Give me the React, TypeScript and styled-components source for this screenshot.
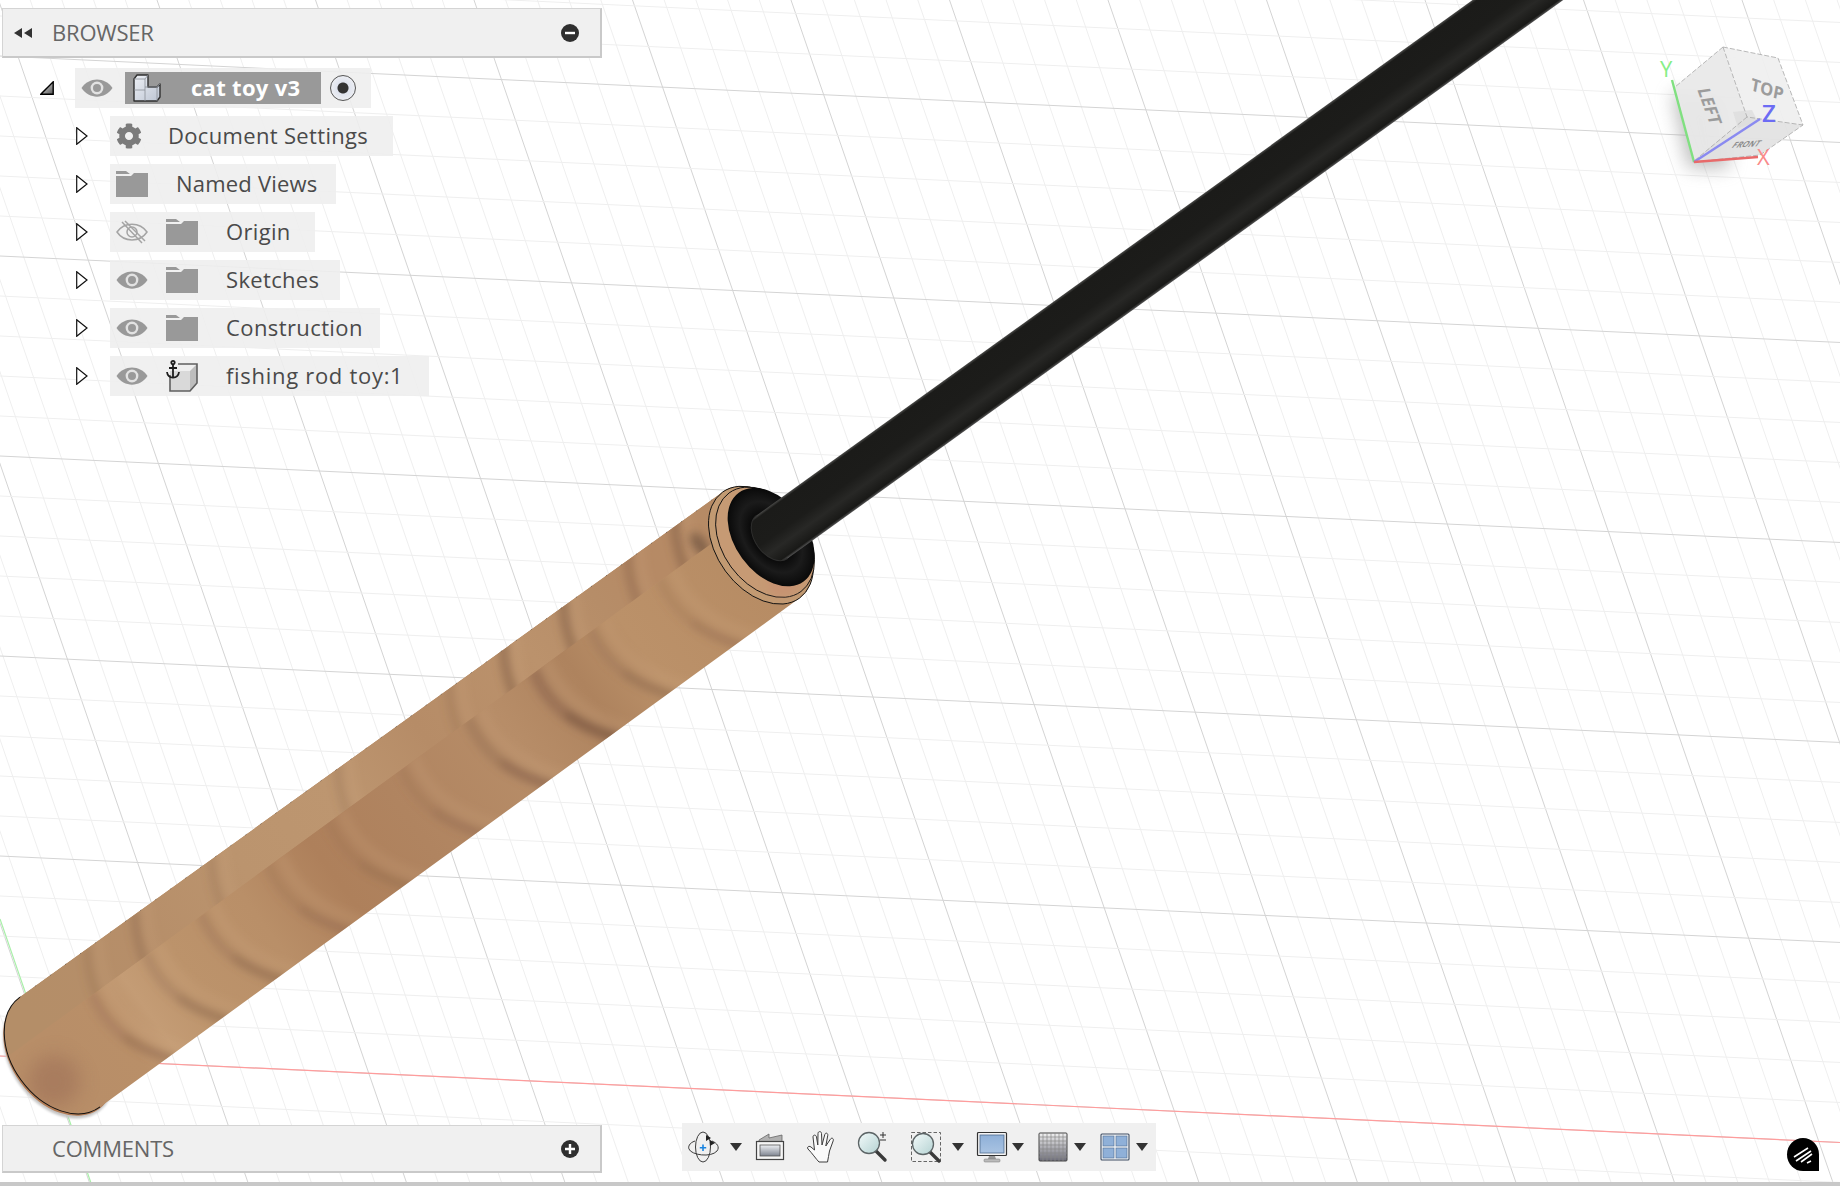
import React from 'react';
import styled, { createGlobalStyle } from 'styled-components';
import { FaCog } from 'react-icons/fa';

const GlobalStyle = createGlobalStyle`
  html, body {
    margin: 0;
    padding: 0;
    background: #fff;
    overflow: hidden;
  }
  body {
    font-family: "Open Sans", "Noto Sans", "Liberation Sans", sans-serif;
  }
`;

const Viewport = styled.div`
  position: relative;
  width: 1840px;
  height: 1186px;
  overflow: hidden;
  background: #fff;
`;

const Scene = styled.svg`
  position: absolute;
  top: 0;
  left: 0;
`;

const Hud = styled.div`
  position: relative;
  height: 1182px;
  box-sizing: border-box;
  padding: 8px 0 9px 2px;
  display: flex;
  flex-direction: column;
  justify-content: space-between;
`;

const StatusStrip = styled.div`
  position: relative;
  height: 4px;
  background: #c8c8c8;
`;

const PanelBar = styled.div`
  box-sizing: border-box;
  width: 600px;
  height: ${(p: { $h: number }) => p.$h}px;
  background: #f0f0f0;
  border: 1px solid #d4d4d4;
  border-right: 2px solid #c9c9c9;
  border-bottom: 2px solid #c9c9c9;
  display: flex;
  align-items: center;
  padding-right: 21px;
`;

const PanelToggle = styled.svg`
  margin-left: 10px;
  width: 20px;
  height: 10px;
`;

const PanelTitle = styled.span<{ $left: number }>`
  margin-left: ${(p) => p.$left}px;
  padding-bottom: 2px;
  font-size: 22px;
  color: #666;
  letter-spacing: -0.2px;
  flex: 1;
`;

const Tree = styled.div`
  margin-top: 10px;
  display: flex;
  flex-direction: column;
  gap: 8px;
  flex: 1;
`;

const Branch = styled.div<{ $indent: number; $gap: number }>`
  display: flex;
  align-items: center;
  padding-left: ${(p) => p.$indent}px;
  gap: ${(p) => p.$gap}px;
  height: 40px;
`;

const RowChip = styled.div<{ $end: number; $start?: number }>`
  height: 40px;
  display: flex;
  align-items: center;
  padding-left: ${(p) => p.$start ?? 6}px;
  padding-right: ${(p) => p.$end}px;
  background: rgba(238, 238, 238, 0.88);
`;

const RowLabel = styled.span<{ $left: number; $track: number }>`
  margin-left: ${(p) => p.$left}px;
  padding-bottom: 2px;
  font-size: 22px;
  line-height: 38px;
  letter-spacing: ${(p) => p.$track}px;
  color: #4a4a4a;
  white-space: nowrap;
`;

const SelectedName = styled.div`
  box-sizing: border-box;
  width: 196px;
  height: 32px;
  margin-left: 12px;
  background: #999;
  display: flex;
  align-items: center;
  padding-left: 8px;
  color: #fff;
  font-size: 22px;
  font-weight: 700;
  letter-spacing: 0.3px;
  white-space: nowrap;
`;

const SelectedText = styled.span`
  margin-left: 30px;
  padding-bottom: 2px;
`;

const RadioDot = styled.div`
  box-sizing: border-box;
  width: 26px;
  height: 26px;
  margin-left: 9px;
  border-radius: 50%;
  border: 1.5px solid #555;
  background: radial-gradient(circle at 50% 50%, #333 0 5px, #dfe3ee 6px, #f6f6f6 100%);
`;

const GearIcon = styled(FaCog)`
  width: 26px;
  height: 26px;
  color: #7b7b7b;
`;

const Footer = styled.div`
  display: flex;
  align-items: flex-end;
`;

const Toolbar = styled.div`
  margin-left: 80px;
  margin-bottom: 2px;
  height: 48px;
  width: 474px;
  box-sizing: border-box;
  padding-left: 5px;
  background: #f0f0f0;
  display: flex;
  align-items: center;
`;

const ToolSlot = styled.div<{ $ml: number }>`
  margin-left: ${(p) => p.$ml}px;
  display: flex;
  align-items: center;
`;

const ToolIcon = styled.svg`
  width: 34px;
  height: 34px;
  display: block;
`;

const Caret = styled.div`
  width: 0;
  height: 0;
  border-left: 6px solid transparent;
  border-right: 6px solid transparent;
  border-top: 8px solid #333;
`;

const Balloon = styled.div`
  position: absolute;
  right: 21px;
  bottom: 15px;
  width: 32px;
  height: 33px;
  border-radius: 50% 50% 0 50%;
  background: #000;
  display: flex;
  align-items: center;
  justify-content: center;
`;

// ---- scene data, measured off the reference ----

const range = (n: number) => Array.from({ length: n }, (_, i) => i);

const SLOPE_A = 0.345;
const SLOPE_B = 0.047;

const woodLow = [
  [0, '#b88e68'], [60, '#b98f68'], [95, '#c49c75'], [150, '#bc936b'], [240, '#b98f68'],
  [325, '#ae805b'], [420, '#b08460'], [553, '#b78d68'], [640, '#ae835e'], [707, '#bb9169'], [869, '#b68b63'], [920, '#b68b63'],
] as const;

const woodHigh = [
  [0, '#b48e68'], [130, '#b68e69'], [257, '#bb946e'], [374, '#bd9670'], [480, '#b68c67'],
  [616, '#bb926c'], [700, '#b68d68'], [759, '#b68a65'], [920, '#b68b65'],
] as const;

const ringsLow = [
  { x: 57, o: 0.36, w: 10 }, { x: 124, o: 0.38, w: 10 }, { x: 192, o: 0.4, w: 10 }, { x: 275, o: 0.26, w: 10 },
  { x: 350, o: 0.24, w: 10 }, { x: 440, o: 0.26, w: 10 }, { x: 523, o: 0.5, w: 11 }, { x: 604, o: 0.75, w: 12 },
  { x: 675, o: 0.38, w: 10 }, { x: 760, o: 0.26, w: 10 },
];

const ringsHigh = [
  { x: 61, o: 0.22, w: 9 }, { x: 120, o: 0.34, w: 9 }, { x: 215, o: 0.2, w: 9 }, { x: 371, o: 0.2, w: 9 },
  { x: 509, o: 0.22, w: 9 }, { x: 576, o: 0.5, w: 10 }, { x: 650, o: 0.5, w: 10 }, { x: 730, o: 0.36, w: 10 }, { x: 788, o: 0.5, w: 10 },
];

const ringPath = (x0: number, from: number, to: number) =>
  range(11)
    .map((i) => {
      const y = from + ((to - from) * i) / 10;
      return `${i === 0 ? 'M' : 'L'}${(x0 + 0.0053 * (y + 3) * (y + 3)).toFixed(1)} ${y.toFixed(1)}`;
    })
    .join(' ');

const HANDLE = 'M0 -68 A48 68 0 0 0 0 68 L865 69 A44 65.5 0 0 0 865 -62 Z';

const GridLines = () => (
  <g>
    {range(90).map((k) => {
      const x0 = -318.5 + (k - 12) * 31.7;
      const major = (k - 12) % 5 === 0;
      return (
        <line
          key={`a${k}`}
          x1={x0}
          y1={0}
          x2={x0 + SLOPE_A * 1186}
          y2={1186}
          stroke={major ? '#d4d4d4' : '#efefef'}
          strokeWidth={1}
        />
      );
    })}
    {range(32).map((k) => {
      const y0 = 1096 - k * 40;
      const major = (k - 1) % 5 === 0;
      return (
        <line
          key={`b${k}`}
          x1={0}
          y1={y0}
          x2={1840}
          y2={y0 + SLOPE_B * 1840}
          stroke={major ? '#d4d4d4' : '#efefef'}
          strokeWidth={1}
        />
      );
    })}
    <line x1={0} y1={1056} x2={1840} y2={1056 + SLOPE_B * 1840} stroke="#ff9c9c" strokeWidth={1.2} />
    <line x1={0} y1={919} x2={92} y2={1186} stroke="#a8f0a8" strokeWidth={1.2} />
  </g>
);

const Handle = () => (
  <g transform="translate(60 1052) rotate(-36.1)">
    <ellipse cx={-4} cy={3} rx={48} ry={68} fill="#c4c4c4" filter="url(#soft1)" />
    <ellipse cx={-2} cy={1} rx={48} ry={68} fill="#b47d56" />
    <path d={HANDLE} fill="url(#woodLow)" />
    <g clipPath="url(#handleClip)">
      <g clipPath="url(#aboveSeam)">
        <rect x={-60} y={-80} width={1000} height={53} fill="url(#woodHigh)" />
        <g filter="url(#soft4)" fill="none">
          {ringsHigh.map((r) => (
            <g key={r.x}>
              <path d={ringPath(r.x + 14, -70, -20)} stroke="#d2ac86" strokeWidth={9} opacity={0.16} />
              <path d={ringPath(r.x, -70, -20)} stroke="#7e5a42" strokeWidth={r.w} opacity={r.o} />
            </g>
          ))}
        </g>
        <ellipse cx={816} cy={-33} rx={7} ry={14} fill="#6e5240" opacity={0.7} filter="url(#soft4)" />
      </g>
      <g clipPath="url(#belowSeam)">
        <g filter="url(#soft4)" fill="none">
          {ringsLow.map((r) => (
            <g key={r.x}>
              <path d={ringPath(r.x + 16, -30, 75)} stroke="#d2ac86" strokeWidth={10} opacity={0.18} />
              <path d={ringPath(r.x, -30, 75)} stroke="#86604a" strokeWidth={r.w} opacity={r.o * 0.7} />
              <path d={ringPath(r.x, 25, 75)} stroke="#7a5640" strokeWidth={r.w - 3} opacity={r.o * 0.75} />
            </g>
          ))}
        </g>
        <ellipse cx={-22} cy={20} rx={26} ry={26} fill="#9c6e56" opacity={0.55} filter="url(#soft7)" />
      </g>
    </g>
    <path d="M0 -68 A48 68 0 0 0 0 68" fill="none" stroke="#111" strokeWidth={1} />
    <path d="M0 -68 L865 -62" stroke="#1a1a1a" strokeWidth={0.6} strokeDasharray="1.5 17" opacity={0.55} />
    <ellipse cx={865} cy={3.5} rx={44} ry={65.5} fill="#c29a72" stroke="#111" strokeWidth={0.9} />
    <ellipse cx={870} cy={3.5} rx={42} ry={61} fill="#c69a74" stroke="#111" strokeWidth={0.9} />
    <ellipse cx={862} cy={46} rx={16} ry={14} fill="#c98a70" opacity={0.5} filter="url(#soft4)" />
    <ellipse cx={878} cy={3} rx={36} ry={55} fill="url(#rubber)" />
  </g>
);

const Rod = () => (
  <g transform="translate(772 537) rotate(-35.75)">
    <rect x={0} y={-26.5} width={1100} height={53} fill="url(#rodShade)" />
    <ellipse cx={0} cy={0} rx={17} ry={26.5} fill="url(#rodShade)" />
    <path d="M0 -26.5 A17 26.5 0 0 0 0 26.5" fill="none" stroke="#2e2e2d" strokeWidth={1} />
  </g>
);

const ViewCube = () => (
  <g>
    <polygon points="1672,92 1688,168 1730,168 1720,100" fill="#8a8a8a" opacity={0.55} filter="url(#soft7)" />
    <polygon points="1723,47 1675,87 1693,162 1747,117" fill="#e9e9e9" opacity={0.94} />
    <polygon points="1723,47 1778,58 1803,125 1747,117" fill="#efefef" opacity={0.94} />
    <polygon points="1693,162 1747,117 1803,125 1760,155" fill="#e2e2e2" opacity={0.94} />
    <polygon points="1733,112 1752,110 1758,122 1738,128" fill="#dcdcdc" opacity={0.7} />
    <g fill="none" stroke="#a8a8a8" strokeWidth={0.8} strokeDasharray="5 2">
      <path d="M1723 47 L1778 58 L1803 125 L1760 155 L1693 162 M1723 47 L1675 87 M1723 47 L1747 117 L1803 125 M1747 117 L1693 162" />
    </g>
    <text x={0} y={0} transform="translate(1697 89) rotate(70) skewX(-12)" fontSize={17} fontWeight={700} fill="#9c9c9c" fontFamily="Open Sans, sans-serif">LEFT</text>
    <text x={0} y={0} transform="translate(1750 90) rotate(18) skewX(8)" fontSize={17} fontWeight={700} fill="#9c9c9c" fontFamily="Open Sans, sans-serif">TOP</text>
    <text x={0} y={0} transform="translate(1731 148) rotate(-4) skewX(-40)" fontSize={8} fontWeight={700} fill="#8c8c8c" fontFamily="Open Sans, sans-serif">FRONT</text>
    <line x1={1694} y1={162} x2={1672} y2={80} stroke="#80e080" strokeWidth={2.4} />
    <line x1={1694} y1={162} x2={1760} y2={119} stroke="#8a8af0" strokeWidth={2.4} />
    <line x1={1694} y1={162} x2={1758} y2={157} stroke="#e86a6a" strokeWidth={2.4} />
    <text x={1660} y={77} fontSize={22} fill="#86ee86" fontFamily="Open Sans, sans-serif">Y</text>
    <text x={1762} y={122} fontSize={24} fontWeight={600} fill="#6c6cf4" fontFamily="Open Sans, sans-serif">Z</text>
    <text x={1757} y={165} fontSize={22} fill="#fb8a8a" fontFamily="Open Sans, sans-serif">X</text>
  </g>
);

const SceneDefs = () => (
  <defs>
    <filter id="soft1" filterUnits="userSpaceOnUse" x={-200} y={-200} width={2400} height={1800}>
      <feGaussianBlur stdDeviation={1} />
    </filter>
    <filter id="soft4" filterUnits="userSpaceOnUse" x={-200} y={-200} width={2400} height={1800}>
      <feGaussianBlur stdDeviation={4.5} />
    </filter>
    <filter id="soft7" filterUnits="userSpaceOnUse" x={-200} y={-200} width={2400} height={1800}>
      <feGaussianBlur stdDeviation={9} />
    </filter>
    <linearGradient id="woodLow" gradientUnits="userSpaceOnUse" x1={0} y1={0} x2={920} y2={0}>
      {woodLow.map(([at, color]) => (
        <stop key={at} offset={at / 920} stopColor={color} />
      ))}
    </linearGradient>
    <linearGradient id="woodHigh" gradientUnits="userSpaceOnUse" x1={0} y1={0} x2={920} y2={0}>
      {woodHigh.map(([at, color]) => (
        <stop key={at} offset={at / 920} stopColor={color} />
      ))}
    </linearGradient>
    <clipPath id="handleClip">
      <path d={HANDLE} />
    </clipPath>
    <clipPath id="aboveSeam">
      <rect x={-60} y={-90} width={1000} height={63} />
    </clipPath>
    <clipPath id="belowSeam">
      <rect x={-60} y={-27} width={1000} height={120} />
    </clipPath>
    <radialGradient id="rubber" cx="50%" cy="50%" r="50%">
      <stop offset="0.5" stopColor="#0c0c0c" />
      <stop offset="0.72" stopColor="#1b1b1b" />
      <stop offset="0.88" stopColor="#111" />
      <stop offset="1" stopColor="#090909" />
    </radialGradient>
    <linearGradient id="rodShade" gradientUnits="userSpaceOnUse" x1={0} y1={-26.5} x2={0} y2={26.5}>
      <stop offset="0" stopColor="#4a4a48" />
      <stop offset="0.05" stopColor="#1b1b19" />
      <stop offset="0.5" stopColor="#1c1c1a" />
      <stop offset="0.72" stopColor="#282826" />
      <stop offset="0.95" stopColor="#191917" />
      <stop offset="1" stopColor="#555" />
    </linearGradient>
    <linearGradient id="glass" x1="0" y1="0" x2="1" y2="1">
      <stop offset="0" stopColor="#f4fbfb" />
      <stop offset="1" stopColor="#b4d2d2" />
    </linearGradient>
    <linearGradient id="screen" x1="0" y1="0" x2="0" y2="1">
      <stop offset="0" stopColor="#8fb0d8" />
      <stop offset="1" stopColor="#a9c3e2" />
    </linearGradient>
    <linearGradient id="metal" x1="0" y1="0" x2="0" y2="1">
      <stop offset="0" stopColor="#eef0f4" />
      <stop offset="1" stopColor="#7e8490" />
    </linearGradient>
    <linearGradient id="gridFade" x1="0" y1="0" x2="0" y2="1">
      <stop offset="0" stopColor="#f2f2f2" />
      <stop offset="1" stopColor="#6c6c78" />
    </linearGradient>
    <linearGradient id="blockFace" x1="0" y1="0" x2="1" y2="1">
      <stop offset="0" stopColor="#eef1f6" />
      <stop offset="1" stopColor="#bcc4d2" />
    </linearGradient>
    <linearGradient id="rootTri" x1="0" y1="0" x2="1" y2="1">
      <stop offset="0" stopColor="#eee" />
      <stop offset="1" stopColor="#555" />
    </linearGradient>
  </defs>
);

// ---- tree icons ----

const EyeIcon = () => (
  <svg width={32} height={20} viewBox="0 0 32 20">
    <path d="M0.5 10 C8 -1.5 24 -1.5 31.5 10 C24 21.5 8 21.5 0.5 10 Z" fill="#999" />
    <circle cx={16} cy={10} r={6.4} fill="#e2e2e2" />
    <circle cx={16} cy={10} r={4} fill="#999" />
  </svg>
);

const EyeOffIcon = () => (
  <svg width={32} height={26} viewBox="0 0 32 26">
    <g fill="none" stroke="#a4a4a4" strokeWidth={1.5}>
      <path d="M1 13 C8 2.5 24 2.5 31 13 C24 23.5 8 23.5 1 13 Z" />
      <circle cx={16} cy={13} r={5} />
      <path d="M6 3 L26 24 M9 2 L29 22" />
    </g>
  </svg>
);

const FolderIcon = () => (
  <svg width={32} height={26} viewBox="0 0 32 26">
    <path d="M0 0 H10 L14 3 H0 Z M0 5 H15 L18 2 H32 V26 H0 Z" fill="#999" />
  </svg>
);

const ExpandArrow = () => (
  <svg width={12} height={18} viewBox="0 0 12 18">
    <polygon points="0.7,0.7 11,9 0.7,17.3" fill="#fff" stroke="#111" strokeWidth={1.2} />
  </svg>
);

const RootArrow = () => (
  <svg width={14} height={14} viewBox="0 0 14 14">
    <polygon points="0.8,13.2 13.2,13.2 13.2,0.8" fill="url(#rootTri)" stroke="#000" strokeWidth={1.4} />
  </svg>
);

const BlocksIcon = () => (
  <svg width={28} height={28} viewBox="0 0 28 28">
    <g stroke="#2f2f2f" strokeWidth={1.4} strokeLinejoin="round">
      <path d="M1 5 L4 1 H15 V13 H24 L27 10 V23 L24 27 H1 Z" fill="url(#blockFace)" />
      <path d="M1 5 H12 L15 1 M12 5 V27 M12 13 H24 L27 10 M24 13 V27 M1 16 H12" fill="none" strokeWidth={0.8} stroke="#8a8f98" />
    </g>
  </svg>
);

const ComponentIcon = () => (
  <svg width={32} height={32} viewBox="0 0 32 32">
    <polygon points="4,11 24,11 24,31 4,31" fill="#d9d9d9" />
    <polygon points="12,4 31,4 24,11 4,11" fill="#efefef" />
    <polygon points="24,11 31,4 31,23 24,31" fill="#bdbdbd" />
    <path d="M4 15 V31 H24 L31 23 V4 H12" fill="none" stroke="#5f5f5f" strokeWidth={1.6} />
    <g fill="none" stroke="#1d1d1d" strokeWidth={1.8}>
      <circle cx={7} cy={2.6} r={1.7} />
      <path d="M7 4.5 V17 M3 8 H11 M1 12 C1.5 16 4 17.5 7 17.5 C10 17.5 12.5 16 13 12" />
    </g>
  </svg>
);

// ---- toolbar icons ----

const OrbitIcon = () => (
  <ToolIcon viewBox="0 0 34 34">
    <g fill="none" stroke="#3c3c3c" strokeWidth={1}>
      <ellipse cx={16} cy={17} rx={7.5} ry={15} />
      <path d="M8 11 C2 13 1 17 2 19 C4 25 24 28 30 21 C33 17 30 13 25 11" />
    </g>
    <path d="M19 5 L24 8 L19 11 Z M23 10 L28 13 L23 16 Z" fill="#222" />
    <path d="M16 14.5 V21 M12.8 17.8 H19.2" stroke="#1a84e0" strokeWidth={1.6} />
  </ToolIcon>
);

const FitIcon = () => (
  <ToolIcon viewBox="0 0 34 34">
    <path d="M6 10 L16 4 V8 L29 5 V12 H6 Z" fill="#b0b0b0" stroke="#666" strokeWidth={0.8} />
    <rect x={3.5} y={11.5} width={27} height={18} fill="#f6f6f6" stroke="#444" strokeWidth={1.2} />
    <rect x={7} y={15} width={20} height={11} fill="url(#metal)" stroke="#555" strokeWidth={0.8} />
  </ToolIcon>
);

const HandIcon = () => (
  <ToolIcon viewBox="0 0 34 34">
    <path
      d="M14 32 C11 29 7 23 3 19 C1.5 17 4 15.5 6 17 L9.5 20 L8 7 C8 4.5 11 4.5 11.5 7 L12.8 15 L13 3.5 C13 1 16.5 1 16.5 3.5 L17 15 L19.8 4.5 C20.5 2.3 23 3 22.8 5.2 L20.8 16 L25.5 9 C26.8 7.3 29 8.5 28.2 10.8 L24.5 21 C23.5 25 23.5 28 22.5 32 Z"
      fill="#fafafa"
      stroke="#3d3d3d"
      strokeWidth={1}
      strokeLinejoin="round"
    />
  </ToolIcon>
);

const ZoomIcon = () => (
  <ToolIcon viewBox="0 0 34 34">
    <path d="M19 20 L29 30" stroke="#3a3a3a" strokeWidth={3.4} strokeLinecap="round" />
    <circle cx={13} cy={13} r={10.5} fill="url(#glass)" stroke="#5c6466" strokeWidth={1.3} />
    <path d="M27 2 V8 M24 5 H30 M24 10 H30" stroke="#333" strokeWidth={1} />
  </ToolIcon>
);

const ZoomWindowIcon = () => (
  <ToolIcon viewBox="0 0 34 34">
    <rect x={2.5} y={2.5} width={29} height={29} fill="none" stroke="#666" strokeWidth={1} strokeDasharray="3.5 2" />
    <path d="M20 21 L30 31" stroke="#3a3a3a" strokeWidth={3.4} strokeLinecap="round" />
    <circle cx={14} cy={14} r={10.5} fill="url(#glass)" stroke="#5c6466" strokeWidth={1.3} />
  </ToolIcon>
);

const DisplayIcon = () => (
  <ToolIcon viewBox="0 0 34 34">
    <rect x={2.5} y={2.5} width={29} height={23} rx={1} fill="#f4f4f4" stroke="#333" strokeWidth={1.2} />
    <rect x={5} y={5} width={24} height={18} fill="url(#screen)" stroke="#4f6c90" strokeWidth={0.8} />
    <path d="M14 26 H20 L21 29 H13 Z" fill="#999" />
    <rect x={9} y={29} width={16} height={3} rx={1} fill="#bbb" stroke="#777" strokeWidth={0.5} />
  </ToolIcon>
);

const GridIcon = () => (
  <ToolIcon viewBox="0 0 34 34">
    <rect x={3} y={3} width={28} height={28} rx={1} fill="url(#gridFade)" stroke="#444" strokeWidth={1} />
    <g stroke="#888" strokeWidth={0.7}>
      {range(6).map((i) => (
        <path key={i} d={`M${7 + i * 4} 3 V31 M3 ${7 + i * 4} H31`} />
      ))}
    </g>
  </ToolIcon>
);

const ViewsIcon = () => (
  <ToolIcon viewBox="0 0 34 34">
    <rect x={3} y={4} width={28} height={26} rx={1} fill="#eef2f7" stroke="#3f4d62" strokeWidth={1.1} />
    <rect x={5} y={6} width={11} height={10} fill="#8fb0d8" stroke="#4f6c90" strokeWidth={0.6} />
    <rect x={18} y={6} width={11} height={10} fill="#8fb0d8" stroke="#4f6c90" strokeWidth={0.6} />
    <rect x={5} y={18} width={11} height={10} fill="#8fb0d8" stroke="#4f6c90" strokeWidth={0.6} />
    <rect x={18} y={18} width={11} height={10} fill="#8fb0d8" stroke="#4f6c90" strokeWidth={0.6} />
  </ToolIcon>
);

const RoundAction = ({ plus }: { plus?: boolean }) => (
  <svg width={18} height={18} viewBox="0 0 18 18">
    <circle cx={9} cy={9} r={9} fill="#2f2f2f" />
    <path d={plus ? 'M4 9 H14 M9 4 V14' : 'M4 9 H14'} stroke="#fff" strokeWidth={2.4} />
  </svg>
);

const treeRows = [
  { label: 'Document Settings', icons: 'gear', left: 26, end: 25, track: 0.33 },
  { label: 'Named Views', icons: 'folder', left: 28, end: 19, track: 0.2 },
  { label: 'Origin', icons: 'off', left: 28, end: 24, track: 0.33 },
  { label: 'Sketches', icons: 'eye', left: 28, end: 21, track: 0.33 },
  { label: 'Construction', icons: 'eye', left: 28, end: 17, track: 0.4 },
  { label: 'fishing rod toy:1', icons: 'component', left: 28, end: 26, track: 0.7 },
];

const IconPair = styled.div`
  display: flex;
  align-items: center;
  gap: 18px;
`;

const RowIcons = ({ kind }: { kind: string }) => {
  if (kind === 'gear') return <GearIcon />;
  if (kind === 'folder') return <FolderIcon />;
  return (
    <IconPair>
      {kind === 'off' ? <EyeOffIcon /> : <EyeIcon />}
      {kind === 'component' ? <ComponentIcon /> : <FolderIcon />}
    </IconPair>
  );
};

const tools = [
  { Icon: OrbitIcon, ml: 0 },
  { caret: true, ml: 9 },
  { Icon: FitIcon, ml: 11 },
  { Icon: HandIcon, ml: 18 },
  { Icon: ZoomIcon, ml: 17 },
  { Icon: ZoomWindowIcon, ml: 19 },
  { caret: true, ml: 9 },
  { Icon: DisplayIcon, ml: 11 },
  { caret: true, ml: 3 },
  { Icon: GridIcon, ml: 12 },
  { caret: true, ml: 4 },
  { Icon: ViewsIcon, ml: 12 },
  { caret: true, ml: 4 },
];

const App = () => {
  return (
    <Viewport>
      <GlobalStyle />
      <Scene width={1840} height={1186} viewBox="0 0 1840 1186">
        <SceneDefs />
        <GridLines />
        <Handle />
        <Rod />
        <ViewCube />
      </Scene>
      <Hud>
        <PanelBar $h={50}>
          <PanelToggle viewBox="0 0 20 10">
            <path d="M9 0 V10 L1 5 Z M19 0 V10 L11 5 Z" fill="#333" />
          </PanelToggle>
          <PanelTitle $left={19}>BROWSER</PanelTitle>
          <RoundAction />
        </PanelBar>
        <Tree>
          <Branch $indent={38} $gap={21}>
            <RootArrow />
            <RowChip $end={15}>
              <EyeIcon />
              <SelectedName>
                <BlocksIcon />
                <SelectedText>cat toy v3</SelectedText>
              </SelectedName>
              <RadioDot />
            </RowChip>
          </Branch>
          {treeRows.map((row) => (
            <Branch key={row.label} $indent={74} $gap={22}>
              <ExpandArrow />
              <RowChip $end={row.end}>
                <RowIcons kind={row.icons} />
                <RowLabel $left={row.left} $track={row.track}>
                  {row.label}
                </RowLabel>
              </RowChip>
            </Branch>
          ))}
        </Tree>
        <Footer>
          <PanelBar $h={48}>
            <PanelTitle $left={49}>COMMENTS</PanelTitle>
            <RoundAction plus />
          </PanelBar>
          <Toolbar>
            {tools.map((tool, i) => (
              <ToolSlot key={i} $ml={tool.ml}>
                {tool.Icon ? <tool.Icon /> : <Caret />}
              </ToolSlot>
            ))}
          </Toolbar>
        </Footer>
      </Hud>
      <StatusStrip />
      <Balloon>
        <svg width={24} height={24} viewBox="0 0 24 24">
          <path d="M3 14 L17 5 M5 18 L20 8 M10 19 L21 11 M16 20 L20 18" stroke="#fff" strokeWidth={1.6} />
        </svg>
      </Balloon>
    </Viewport>
  );
};

export default App;
